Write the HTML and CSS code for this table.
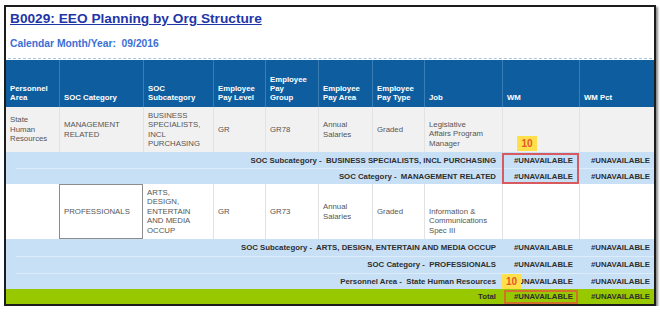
FILE: index.html
```html
<!DOCTYPE html>
<html>
<head>
<meta charset="utf-8">
<title>B0029: EEO Planning by Org Structure</title>
<link rel="stylesheet" href="styles.css">
</head>
<body>
<div class="frame">
  <h1 class="title"><a href="#">B0029: EEO Planning by Org Structure</a></h1>
  <div class="subtitle">Calendar Month/Year:&nbsp; 09/2016</div>
  <div class="rule"></div>
  <div class="report">
    <table>
      <colgroup>
        <col class="c-pa"><col class="c-cat"><col class="c-sub"><col class="c-lvl"><col class="c-grp">
        <col class="c-area"><col class="c-type"><col class="c-job"><col class="c-wm"><col class="c-pct">
      </colgroup>
      <thead>
        <tr class="hdr">
          <th>Personnel<br>Area</th>
          <th>SOC Category</th>
          <th>SOC<br>Subcategory</th>
          <th>Employee<br>Pay Level</th>
          <th>Employee<br>Pay<br>Group</th>
          <th>Employee<br>Pay Area</th>
          <th>Employee<br>Pay Type</th>
          <th>Job</th>
          <th>WM</th>
          <th>WM Pct</th>
        </tr>
      </thead>
      <tbody>
        <tr class="data r1">
          <td>State<br>Human<br>Resources</td>
          <td>MANAGEMENT<br>RELATED</td>
          <td>BUSINESS<br>SPECIALISTS,<br>INCL<br>PURCHASING</td>
          <td>GR</td>
          <td>GR78</td>
          <td>Annual<br>Salaries</td>
          <td>Graded</td>
          <td class="job">Legislative<br>Affairs Program<br>Manager</td>
          <td></td>
          <td></td>
        </tr>
        <tr class="sub">
          <td class="label" colspan="8">SOC Subcategory -&nbsp; BUSINESS SPECIALISTS, INCL PURCHASING</td>
          <td class="wm">#UNAVAILABLE</td>
          <td class="pct">#UNAVAILABLE</td>
        </tr>
        <tr class="sub">
          <td class="label" colspan="8">SOC Category -&nbsp; MANAGEMENT RELATED</td>
          <td class="wm">#UNAVAILABLE</td>
          <td class="pct">#UNAVAILABLE</td>
        </tr>
        <tr class="data r2">
          <td></td>
          <td class="boxed">PROFESSIONALS</td>
          <td class="after-box">ARTS,<br>DESIGN,<br>ENTERTAIN<br>AND MEDIA<br>OCCUP</td>
          <td>GR</td>
          <td>GR73</td>
          <td>Annual<br>Salaries</td>
          <td>Graded</td>
          <td class="job">Information &amp;<br>Communications<br>Spec III</td>
          <td></td>
          <td></td>
        </tr>
        <tr class="sub s17">
          <td class="label" colspan="8">SOC Subcategory -&nbsp; ARTS, DESIGN, ENTERTAIN AND MEDIA OCCUP</td>
          <td class="wm">#UNAVAILABLE</td>
          <td class="pct">#UNAVAILABLE</td>
        </tr>
        <tr class="sub s17">
          <td class="label" colspan="8">SOC Category -&nbsp; PROFESSIONALS</td>
          <td class="wm">#UNAVAILABLE</td>
          <td class="pct">#UNAVAILABLE</td>
        </tr>
        <tr class="sub">
          <td class="label" colspan="8">Personnel Area -&nbsp; State Human Resources</td>
          <td class="wm">#UNAVAILABLE</td>
          <td class="pct">#UNAVAILABLE</td>
        </tr>
        <tr class="total">
          <td class="label" colspan="8">Total</td>
          <td class="wm">#UNAVAILABLE</td>
          <td class="pct">#UNAVAILABLE</td>
        </tr>
      </tbody>
    </table>
    <div class="mark m1"></div>
    <div class="badge b1">10</div>
    <div class="badge b2">10</div>
    <div class="mark m2"></div>
  </div>
</div>
</body>
</html>
```

FILE: styles.css
```css
* { box-sizing: border-box; }

body {
  margin: 0;
  background: #ffffff;
  font-family: "Liberation Sans", Arial, sans-serif;
}

.frame {
  width: 652px;
  height: 301px;
  margin: 5px 0 0 4px;
  border: 2px solid #1c1c1c;
  box-shadow: 2px 2px 2px rgba(0, 0, 0, 0.45);
  overflow: hidden;
  background: #fff;
}

.title {
  margin: 0;
  padding: 4px 4px 0;
  font-size: 13.7px;
  line-height: 16px;
  font-weight: bold;
}

.title a {
  color: #1f36a8;
  text-decoration: underline;
}

.subtitle {
  margin-top: 11px;
  padding-left: 4px;
  font-size: 10.3px;
  line-height: 12px;
  font-weight: bold;
  color: #3b6fd4;
}

.rule {
  margin: 8px 2px 1px;
  border-top: 1px dashed #a8c4e0;
}

.report {
  position: relative;
}

table {
  width: 648px;
  border-collapse: separate;
  border-spacing: 0;
  table-layout: fixed;
  font-size: 7.8px;
}

.c-pa { width: 53px; }
.c-cat { width: 84px; }
.c-sub { width: 70px; }
.c-lvl { width: 52px; }
.c-grp { width: 53px; }
.c-area { width: 54px; }
.c-type { width: 52px; }
.c-job { width: 78px; }
.c-wm { width: 77px; }
.c-pct { width: 75px; }

.hdr { height: 47px; }

.hdr th {
  background: #0e5e9f;
  color: #ffffff;
  font-weight: bold;
  line-height: 9px;
  text-align: left;
  vertical-align: bottom;
  padding: 0 4px 5px;
  border-left: 1px solid #3a7db5;
}

.hdr th:first-child { border-left: none; }

.data td {
  color: #555555;
  line-height: 9.4px;
  vertical-align: middle;
  padding: 0 4px;
  border-left: 1px solid #e2e2e2;
}

.data td:first-child { border-left: none; }

.r1 { height: 45px; }
.r1 td { background: #f1f1f1; }

.r2 { height: 55px; }
.r2 td { background: #ffffff; }

.data td.job {
  vertical-align: bottom;
  padding-bottom: 4px;
}

.data td.boxed {
  border: 1px solid #8c8c8c;
}

.data td.after-box { border-left: none; }

.sub { height: 16px; }
.sub.s17 { height: 17px; }

.sub td,
.total td {
  font-weight: bold;
  color: #2e2e2e;
  vertical-align: middle;
  padding: 0;
  white-space: nowrap;
}

.sub td {
  background-color: #c8e0f6;
}

.sub + .sub td {
  background-image: linear-gradient(#ddecfa, #ddecfa);
  background-repeat: no-repeat;
  background-size: 100% 1px;
  background-position: 0 0;
}

.sub + .sub td.label {
  background-size: calc(100% - 10px) 1px;
  background-position: 10px 0;
}

.total { height: 15px; }

.total td {
  background: #98c800;
}

td.label {
  text-align: right;
  padding-right: 6px;
}

td.wm {
  text-align: right;
  padding-right: 6px;
}

td.pct {
  text-align: right;
  padding-right: 4px;
}

.badge {
  position: absolute;
  width: 20px;
  height: 15px;
  background: #ffe04a;
  color: #e2572b;
  font-size: 10px;
  line-height: 15px;
  font-weight: bold;
  text-align: center;
}

.b1 { left: 511px; top: 76px; }
.b2 { left: 496px; top: 214px; width: 19px; }

.mark {
  position: absolute;
  border: 2px solid #d85a5e;
}

.m1 { left: 496px; top: 93px; width: 77px; height: 31px; }
.m2 { left: 498px; top: 230px; width: 74px; height: 14px; border-color: #d2702c; }
```
